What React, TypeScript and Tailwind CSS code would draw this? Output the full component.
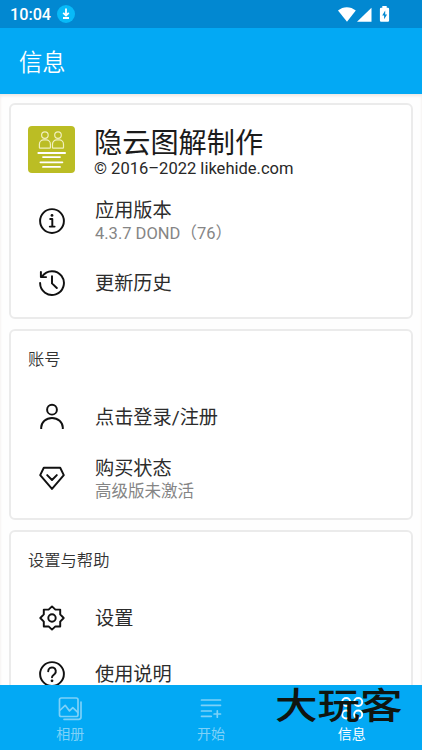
import React from "react";

const stroke = {
  fill: "none",
  stroke: "currentColor",
  strokeWidth: 1.95,
  strokeLinejoin: "round" as const,
  strokeLinecap: "round" as const,
};

function InfoIcon() {
  return (
    <svg className="size-7" viewBox="0 0 28 28" {...stroke}>
      <circle cx="14" cy="14" r="11.9" />
      <path d="M12.2 12h2.1v7.2M11.8 19.6h4.8" />
      <circle cx="14" cy="8.4" r="1.4" fill="currentColor" stroke="none" />
    </svg>
  );
}

function HistoryIcon() {
  return (
    <svg className="size-7" viewBox="0 0 28 28" {...stroke}>
      <path d="M2.1 14A11.9 11.9 0 1 0 4.2 7.3M2.9 2.9v5.2h5.2M14 7.3V14.4l4.8 4.6" />
    </svg>
  );
}

function PersonIcon() {
  return (
    <svg className="size-7" viewBox="0 0 28 28" {...stroke} strokeLinecap="butt">
      <circle cx="14" cy="6.7" r="4.9" />
      <path d="M3.2 26.1v-1.5a10.8 9.7 0 0 1 21.6 0v1.5" />
    </svg>
  );
}

function GemIcon() {
  return (
    <svg className="size-7" viewBox="0 0 28 28" {...stroke}>
      <path d="M5.8 2.7h16.4l3.6 7.4L14 23.9 2.2 10.1zM9.2 10.1l4.8 4.9 4.8-4.9" />
    </svg>
  );
}

function SettingsIcon() {
  return (
    <svg className="size-7" viewBox="0 0 28 28" {...stroke}>
      <path d="M14 2.4l3.4 3.2h4.8v4.8L25.7 14l-3.5 3.6v4.8h-4.8L14 25.6l-3.4-3.2H5.8v-4.8L2.3 14l3.5-3.6V5.6h4.8z" />
      <circle cx="14" cy="14" r="3.7" />
    </svg>
  );
}

function HelpIcon() {
  return (
    <svg className="size-7" viewBox="0 0 28 28" {...stroke}>
      <circle cx="14" cy="14" r="11.9" />
      <path d="M10.2 11.2a3.8 3.8 0 1 1 6.5 2.7c-1.5 1.3-2.7 1.8-2.7 3.4" />
      <circle cx="14" cy="20.8" r="1.4" fill="currentColor" stroke="none" />
    </svg>
  );
}

function AppLogo() {
  return (
    <svg className="size-[47px] rounded-[4px] bg-[#bbbd24]" viewBox="0 0 47 47" fill="none" stroke="#f1efbd">
      <g strokeWidth="1.2">
        <circle cx="16.9" cy="9.1" r="3.3" />
        <circle cx="30" cy="9.1" r="3.3" />
        <path d="M11.4 21.5v-3.3a4.3 4.3 0 0 1 4.3-4.3h2.4a4.3 4.3 0 0 1 4.3 4.3v3.3q0 .7-.7.7H12.1q-.7 0-.7-.7zM24.5 21.5v-3.3a4.3 4.3 0 0 1 4.3-4.3h2.4a4.3 4.3 0 0 1 4.3 4.3v3.3q0 .7-.7.7h-9.6q-.7 0-.7-.7z" />
      </g>
      <path d="M10.3 27h26.8M15 31.1h17M12.4 36.3h22M15 40.9h17" stroke="#fff" strokeWidth="1.8" strokeLinecap="round" />
    </svg>
  );
}

function Row({ icon, title, detail, className }: { icon: React.ReactNode; title: string; detail?: string; className: string }) {
  return (
    <div className={`flex items-center ${className}`}>
      <div className="ml-[26.5px] w-[57.5px] shrink-0 text-[#111]">{icon}</div>
      <div className="pt-px">
        <div className="text-[19.2px] leading-[25px] text-[#2c2c2c]">{title}</div>
        {detail && <div className="text-[16.5px] leading-[22px] text-[#858585]">{detail}</div>}
      </div>
    </div>
  );
}

function Card({ children, className }: { children: React.ReactNode; className: string }) {
  return <section className={`mx-[9px] w-[404px] shrink-0 rounded-[6px] border-2 border-[#ebebeb] bg-white ${className}`}>{children}</section>;
}

export default function App() {
  return (
    <div className="flex h-[750px] w-[422px] flex-col overflow-hidden bg-[#fefefe] font-[Roboto,'Noto_Sans_CJK_SC',sans-serif] font-normal">
      <header className="shrink-0 bg-[#03a9f4] text-white">
        <div className="flex h-7 items-center bg-[#0288d1] pl-[10px] pr-[31px]">
          <span className="mt-[2px] text-[16.2px] font-medium leading-5">10:04</span>
          <svg className="ml-[6px] size-[18px]" viewBox="0 0 18 18">
            <circle cx="9" cy="9" r="9" fill="#08baf8" />
            <path d="M9 3.6v6.5M6.2 7.8L9 10.6l2.8-2.8M6 13h6" fill="none" stroke="#fff" strokeWidth="1.8" />
          </svg>
          <svg className="ml-auto h-5 w-[53px]" viewBox="0 0 53 20" fill="#fff">
            <path d="M0 6.6C5.1 2.1 12.5 2.1 17.8 6.6L9 17.7z" />
            <path d="M33.5 3.8v14H19z" />
            <path fillRule="evenodd" d="M44.3 2h4.4v1.8h1.2q1.2 0 1.2 1.2v11.6q0 1.2-1.2 1.2h-6.8q-1.2 0-1.2-1.2V5q0-1.2 1.2-1.2h1.2zM47.2 6.6l-3 4.8h1.9v3.8l3-4.8h-1.9z" />
          </svg>
        </div>
        <h1 className="flex h-[66px] items-center pl-[19px] pt-[5px] text-[23.3px] font-[350]">信息</h1>
      </header>

      <main className="flex min-h-0 flex-1 flex-col gap-[10px] overflow-hidden pt-[9px] shadow-[inset_0_2px_3px_#eee8e5]">
        <Card className="h-[216px]">
          <div className="flex pl-[17px] pt-[21px]">
            <AppLogo />
            <div className="ml-[19px] h-[54px] pt-px">
              <div className="text-[28.2px] leading-[34px] text-[#1b1b1b]">隐云图解制作</div>
              <div className="-mt-[2px] text-[16.55px] leading-5 text-[#282828]">© 2016–2022 likehide.com</div>
            </div>
          </div>
          <Row icon={<InfoIcon />} title="应用版本" detail="4.3.7 DOND（76）" className="mt-[12px] h-[57px]" />
          <Row icon={<HistoryIcon />} title="更新历史" className="h-[67px]" />
        </Card>
        <Card className="h-[191px]">
          <h2 className="pl-[17px] pt-[17px] text-[16.3px] font-[350] leading-6 text-[#333]">账号</h2>
          <Row icon={<PersonIcon />} title="点击登录/注册" className="mt-[15px] h-[60px]" />
          <Row icon={<GemIcon />} title="购买状态" detail="高级版未激活" className="mt-[3px] h-[58px]" />
        </Card>
        <Card className="h-[200px]">
          <h2 className="pl-[17px] pt-[17px] text-[16.3px] font-[350] leading-6 text-[#333]">设置与帮助</h2>
          <Row icon={<SettingsIcon />} title="设置" className="mt-[17px] h-[56px]" />
          <Row icon={<HelpIcon />} title="使用说明" className="h-[56px]" />
        </Card>
      </main>

      <nav className="relative grid h-[65px] shrink-0 grid-cols-3 bg-[#03a9f4] text-[14px] leading-5 text-[#7dd1f8]">
        <div className="flex flex-col items-center pt-[10px]">
          <svg className="size-[26px]" viewBox="0 0 26 26" {...stroke} strokeWidth={1.7}>
            <rect x="2.5" y="3" width="18.5" height="18.5" rx="1.8" />
            <path d="M2.7 15.5l5.5-5.2 4.3 5.6 3.3-3.2 5 4.7M24 7v15q0 2.3-2.3 2.3H7" />
          </svg>
          <span className="mt-[3px]">相册</span>
        </div>
        <div className="flex flex-col items-center pt-[10px]">
          <svg className="size-[26px]" viewBox="0 0 26 26" {...stroke} strokeWidth={1.7}>
            <path d="M3.5 5h19M3.5 10.3h19M3.5 16h9.8M3.5 21.3h9.8M19.3 15.8v6.4M16.1 19h6.4" />
          </svg>
          <span className="mt-[3px]">开始</span>
        </div>
        <div className="flex flex-col items-center pt-[10px] text-white">
          <svg className="size-[26px]" viewBox="0 0 26 26" {...stroke} strokeWidth={1.9}>
            <circle cx="7.2" cy="7" r="4" />
            <circle cx="19.2" cy="7" r="4" />
            <circle cx="7.2" cy="19.5" r="4" />
            <circle cx="19.2" cy="19.5" r="4" />
          </svg>
          <span className="mt-[3px]">信息</span>
        </div>
        <div className="absolute left-[275px] top-[3px] origin-top scale-y-[0.86] whitespace-nowrap text-[42.5px] font-medium leading-[44px] text-[#101510]">大玩客</div>
      </nav>
    </div>
  );
}
